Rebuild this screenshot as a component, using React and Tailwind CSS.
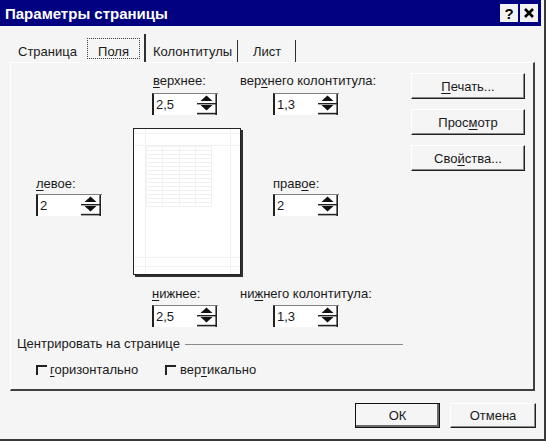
import React from "react";

const U = ({ children }) => (
  <span className="underline decoration-1 underline-offset-[2px]">{children}</span>
);

function Spin({ value }) {
  return (
    <div className="flex h-[22px] w-[66px] items-center border-t border-l-2 border-t-[#808080] border-l-[#202020] bg-white">
      <span className="flex-1 pl-[2px] text-[13px] leading-[15px]">{value}</span>
      <svg width="20" height="21" viewBox="0 0 20 21" className="mr-[1px] self-start">
        <polygon points="3.5,7 15.5,7 9.5,1.5" fill="#111" />
        <rect x="0" y="9" width="20" height="1.4" fill="#222" />
        <polygon points="3.5,11 15.5,11 9.5,16.5" fill="#111" />
        <rect x="0" y="18.8" width="20" height="1.6" fill="#222" />
        <rect x="18.4" y="0" width="1.6" height="21" fill="#222" />
      </svg>
    </div>
  );
}

function Btn({ children, wide }) {
  return (
    <div
      className={
        wide
          ? "flex h-[26px] w-[114px] items-center justify-center border border-t-white border-l-white border-r-[#202020] border-b-[#202020] shadow-[inset_-1px_-1px_0_#8a8a8a] text-[13px] leading-[15px]"
          : "flex h-[25px] w-[86px] items-center justify-center border border-t-white border-l-white border-r-[#202020] border-b-[#202020] shadow-[inset_-1px_-1px_0_#8a8a8a] text-[13px] leading-[15px]"
      }
    >
      {children}
    </div>
  );
}

function Preview() {
  const rows = [];
  for (let i = 0; i <= 15; i++) rows.push(17 + i * 4);
  const cols = [12, 28, 45, 61, 77];
  return (
    <div className="h-[147px] w-[108px] border border-[#222] bg-white shadow-[2px_2px_0_#303030]">
      <svg width="106" height="145" viewBox="0 0 106 145">
        <g stroke="#f1f1f1" strokeWidth="1">
          <line x1="11.5" y1="0" x2="11.5" y2="145" />
          <line x1="96.5" y1="0" x2="96.5" y2="145" />
          <line x1="0" y1="4.5" x2="106" y2="4.5" />
          <line x1="0" y1="16.5" x2="106" y2="16.5" />
          <line x1="0" y1="128.5" x2="106" y2="128.5" />
          <line x1="0" y1="137.5" x2="106" y2="137.5" />
          {rows.map((y) => (
            <line key={"r" + y} x1="11.5" y1={y + 0.5} x2="77.5" y2={y + 0.5} />
          ))}
          {cols.map((x) => (
            <line key={"c" + x} x1={x + 0.5} y1="16.5" x2={x + 0.5} y2="77.5" />
          ))}
        </g>
      </svg>
    </div>
  );
}

export default function App() {
  return (
    <div className="flex h-[441px] w-[546px] flex-col overflow-hidden border-r-2 border-b-2 border-[#3a3a3a] bg-[#f5f5f5] font-['Liberation_Sans',Arial,sans-serif] text-[13px] leading-[15px] text-[#1a1a1a]">
      {/* Title bar */}
      <div className="mr-[3px] flex h-[26px] items-center justify-between bg-[#000080] pl-[5px] pr-[3px]">
        <span className="text-[15px] font-bold leading-[15px] text-white">Параметры страницы</span>
        <div className="flex gap-[2px]">
          <div className="flex h-[18px] w-[18px] items-center justify-center bg-[#f2f2f2] text-[15px] font-bold leading-[15px] text-black">
            ?
          </div>
          <div className="flex h-[18px] w-[18px] items-center justify-center bg-[#f2f2f2]">
            <svg width="12" height="12" viewBox="0 0 12 12">
              <path d="M2 2 L10 10 M10 2 L2 10" stroke="#000" strokeWidth="2.6" />
            </svg>
          </div>
        </div>
      </div>

      {/* Tabs */}
      <div className="flex h-[36px] items-end pl-[10px]">
        <div className="flex h-[24px] w-[75px] justify-center pt-[6px]">Страница</div>
        <div className="h-[28px] w-[61px] border-r-2 border-[#303030] pl-[2px] pt-[4px]">
          <div className="flex h-[21px] w-[53px] justify-center border border-dotted border-[#404040] pt-[5px]">
            Поля
          </div>
        </div>
        <div className="h-[22px] w-[92px] border-r border-[#303030] pl-[7px] pt-[4px]">Колонтитулы</div>
        <div className="h-[22px] w-[58px] border-r border-[#303030] pl-[15px] pt-[4px]">Лист</div>
      </div>

      {/* Panel */}
      <div className="ml-[10px] flex h-[329px] w-[525px] border-t border-l border-t-white border-l-white border-r-2 border-b-2 border-r-[#404040] border-b-[#404040]">
        <div className="flex flex-1 flex-col">
          {/* Row 1 */}
          <div className="flex pt-[10px]">
            <div className="ml-[141px] flex flex-col">
              <span className="pl-[1px]">
                <U>в</U>ерхнее:
              </span>
              <div className="mt-[5px]">
                <Spin value="2,5" />
              </div>
            </div>
            <div className="ml-[22px] flex flex-col">
              <span>
                вер<U>х</U>него колонтитула:
              </span>
              <div className="mt-[5px] ml-[33px]">
                <Spin value="1,3" />
              </div>
            </div>
          </div>

          {/* Row 2 */}
          <div className="mt-[13px] flex">
            <div className="ml-[25px] flex flex-col pt-[48px]">
              <span>
                <U>л</U>евое:
              </span>
              <div className="mt-[3px]">
                <Spin value="2" />
              </div>
            </div>
            <div className="ml-[31px]">
              <Preview />
            </div>
            <div className="ml-[32px] flex flex-col pt-[48px]">
              <span>
                прав<U>о</U>е:
              </span>
              <div className="mt-[3px]">
                <Spin value="2" />
              </div>
            </div>
          </div>

          {/* Row 3 */}
          <div className="mt-[11px] flex">
            <div className="ml-[141px] flex flex-col">
              <span>
                <U>н</U>ижнее:
              </span>
              <div className="mt-[4px]">
                <Spin value="2,5" />
              </div>
            </div>
            <div className="ml-[22px] flex flex-col">
              <span>
                ни<U>ж</U>него колонтитула:
              </span>
              <div className="mt-[4px] ml-[33px]">
                <Spin value="1,3" />
              </div>
            </div>
          </div>

          {/* Group */}
          <div className="mt-[9px] ml-[6px] flex items-center">
            <span>Центрировать на странице</span>
            <div className="mt-[2px] ml-[5px] h-px w-[218px] bg-[#8a8a8a]" />
          </div>
          <div className="mt-[11px] ml-[25px] flex">
            <div className="flex w-[129px] items-start gap-[3px]">
              <div className="mt-[3px] h-[10px] w-[11px] border-t-2 border-l-2 border-[#222]" />
              <span>
                <U>г</U>оризонтально
              </span>
            </div>
            <div className="flex items-start gap-[4px]">
              <div className="mt-[3px] h-[10px] w-[11px] border-t-2 border-l-2 border-[#222]" />
              <span>
                вер<U>т</U>икально
              </span>
            </div>
          </div>
        </div>

        {/* Right buttons */}
        <div className="mr-[8px] flex flex-col gap-[10px] pt-[10px]">
          <Btn wide>
            <span>
              <U>П</U>ечать...
            </span>
          </Btn>
          <Btn wide>
            <span>
              Прос<U>м</U>отр
            </span>
          </Btn>
          <Btn wide>
            <span>
              Сво<U>й</U>ства...
            </span>
          </Btn>
        </div>
      </div>

      {/* Bottom buttons */}
      <div className="mt-[12px] mr-[8px] flex justify-end gap-[10px]">
        <div className="flex h-[25px] w-[85px] items-center justify-center border border-[#111] shadow-[inset_-2px_-2px_0_#6a6a6a]">
          ОК
        </div>
        <Btn>Отмена</Btn>
      </div>
    </div>
  );
}
